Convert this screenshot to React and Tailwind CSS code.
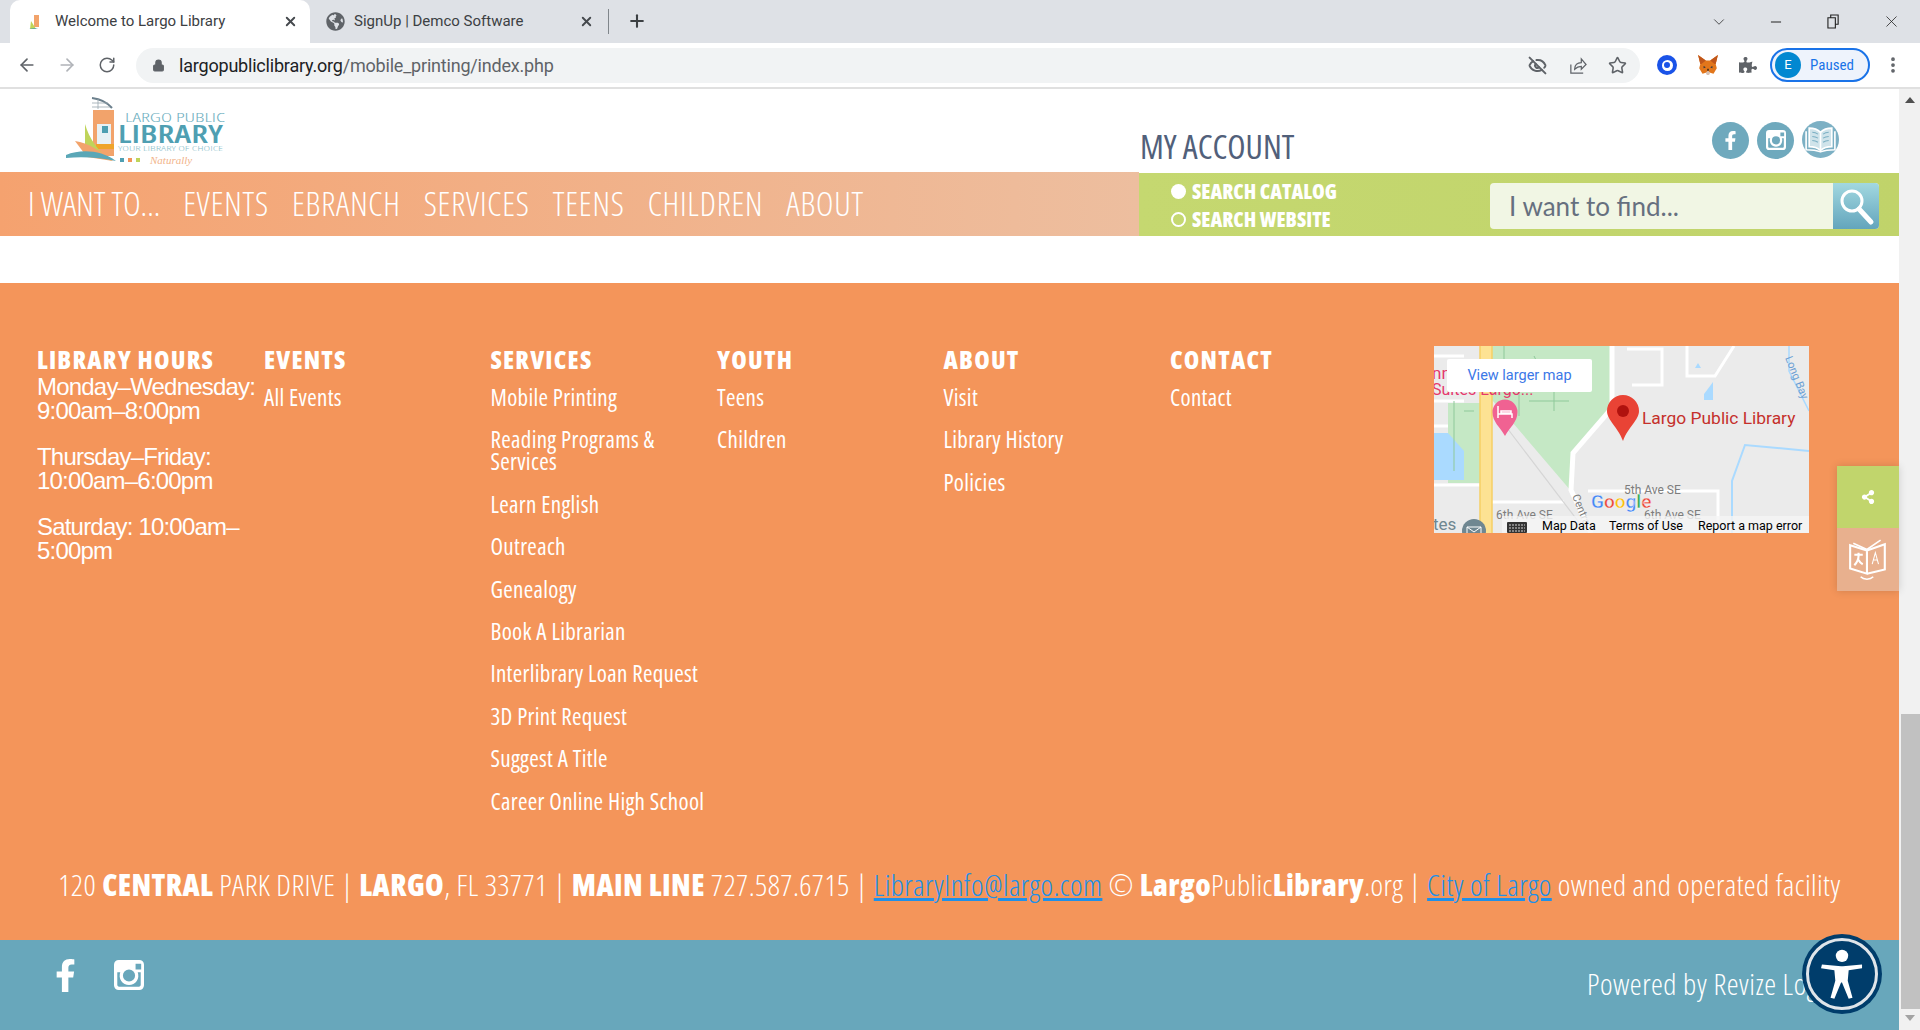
import React from "react";
import { ArrowLeft, ArrowRight, RotateCw, Lock, EyeOff, Star, X, Plus, ChevronDown, Minus, EllipsisVertical } from "lucide-react";
import { FaFacebookF, FaGlobeAmericas, FaPuzzlePiece, FaShareAlt } from "react-icons/fa";

const columns = [
  { title: "EVENTS", links: ["All Events"] },
  {
    title: "SERVICES",
    links: [
      "Mobile Printing",
      "Reading Programs & Services",
      "Learn English",
      "Outreach",
      "Genealogy",
      "Book A Librarian",
      "Interlibrary Loan Request",
      "3D Print Request",
      "Suggest A Title",
      "Career Online High School",
    ],
  },
  { title: "YOUTH", links: ["Teens", "Children"] },
  { title: "ABOUT", links: ["Visit", "Library History", "Policies"] },
  { title: "CONTACT", links: ["Contact"] },
];

const navItems = ["EVENTS", "EBRANCH", "SERVICES", "TEENS", "CHILDREN", "ABOUT"];

function InstaIcon({ className }) {
  return (
    <svg viewBox="0 0 32 32" className={className} fill="currentColor">
      <path
        fillRule="evenodd"
        d="M5 0h22a5 5 0 0 1 5 5v22a5 5 0 0 1-5 5H5a5 5 0 0 1-5-5V5a5 5 0 0 1 5-5zm18 4v6h6V4h-6zM3.500 13v13.500c0 1.200.8 2 2 2h21c1.200 0 2-.8 2-2V13h-3.200a10 10 0 1 1-18.600 0H3.500zM16 10a6.500 6.500 0 1 0 0 13 6.500 6.500 0 0 0 0-13z"
      />
    </svg>
  );
}

function BookIcon() {
  return (
    <svg viewBox="0 0 36 36" className="w-[37px] h-[37px] shrink-0 -mt-[1px]" fill="none" stroke="#fff" strokeWidth="1.600">
      <circle cx="18" cy="18" r="18" fill="#7cb0c4" stroke="none" />
      <path d="M18 11c-3-3-7-4-11-4v18c4 0 8 1 11 3.500C21 26 25 25 29 25V7c-4 0-8 1-11 4z" fill="#cfe3ea" />
      <path d="M18 11v17M4 10v18c5 0 10 .5 14 2 4-1.500 9-2 14-2V10" />
      <path d="M10 11c2 0 4 .6 5.500 1.700M10 15c2 0 4 .6 5.500 1.700M10 19c2 0 4 .6 5.500 1.700M26 11c-2 0-4 .6-5.500 1.700M26 15c-2 0-4 .6-5.500 1.700M26 19c-2 0-4 .6-5.500 1.700" stroke="#7cb0c4" strokeWidth="1" />
    </svg>
  );
}

function Logo() {
  return (
    <svg viewBox="0 0 160 72" className="w-[160px] h-[72px] ml-[65px] shrink-0 font-['Open_Sans',sans-serif] [font-stretch:75%]">
      <path d="M27 3c8 1 15 4 20 10" stroke="#6b7f8c" strokeWidth="2" fill="none" />
      <path d="M27 8h16M33 4v10M27 12h18" stroke="#9aa7ae" strokeWidth="0.800" />
      <rect x="28" y="15" width="21" height="46" fill="#f2a36b" />
      <rect x="32" y="29" width="14" height="20" fill="#e8f1f4" />
      <rect x="37" y="31" width="6" height="7" fill="#4e9fb1" />
      <rect x="31" y="49" width="18" height="5" fill="#efa42a" />
      <path d="M20 29c4 14 13 28 27 37L20 56z" fill="#bfd45a" />
      <path d="M10 46c13 2 26 10 38 20L22 62z" fill="#f2a36b" />
      <path d="M1 60c15-6 35-5 50 6-14-3-32-5-50-3z" fill="#5aa7b7" />
      <text x="60" y="27" fontSize="13" fontWeight="300" textLength="100" lengthAdjust="spacingAndGlyphs" fill="#6fb0bf">LARGO PUBLIC</text>
      <text x="53" y="48" fontWeight="600" fontSize="26" textLength="105" lengthAdjust="spacingAndGlyphs" fill="#4f9fb2">LIBRARY</text>
      <text x="53" y="56" fontSize="8" fontWeight="300" textLength="105" lengthAdjust="spacingAndGlyphs" fill="#8dbfcb">YOUR LIBRARY OF CHOICE</text>
      <rect x="55" y="63" width="4" height="4" fill="#4f9fb2" />
      <rect x="63" y="63" width="4" height="4" fill="#f2935a" />
      <rect x="71" y="63" width="4" height="4" fill="#bfd45a" />
      <text x="85" y="69" fontFamily="Liberation Serif, serif" fontStyle="italic" fontSize="11" fill="#f2b48a">Naturally</text>
    </svg>
  );
}

function MapBox() {
  return (
    <div className="relative w-[375px] h-[187px] shrink-0 overflow-hidden bg-[#ebebeb] font-['Roboto',sans-serif] [font-stretch:100%]">
      <svg viewBox="0 0 375 187" className="block w-[375px] h-[187px]">
        <path d="M58 0H178V62L139 107L137 145L79 77L58 54Z" fill="#c5e8c5" />
        <path d="M14 57h32v80H14z" fill="#c5e8c5" />
        <path d="M0 87h14l16 18v29H0z" fill="#aadaff" />
        <path d="M0 55h30M0 80h14M0 139h46M58 156h72M0 10h30" stroke="#fff" strokeWidth="3" fill="none" />
        <path d="M46 0h12v187H46z" fill="#fde293" />
        <path d="M46 0v187M58 0v187" stroke="#f6cf65" strokeWidth="1.500" />
        <path d="M70 0v25M85 30v40M100 10l10 20 30 10M95 55h40M58 30h50M20 55v70M30 65h10M120 35v30" stroke="#8fc99a" strokeWidth="1" fill="none" />
        <path d="M178 0v62L139 107L137 144l20 43" stroke="#fff" strokeWidth="5" fill="none" />
        <path d="M70 78l80 105" stroke="#d5d5d5" strokeWidth="1.200" />
        <path d="M154 145h130v42M193 3h35v36h-30M253 0v30h28l19-30" stroke="#fff" strokeWidth="3" fill="none" />
        <path d="M261 22l3-5 3 5z M270 48l9-12v18h-9z" fill="#aadaff" />
        <path d="M375 105L311 99L298 135V187" stroke="#aadaff" strokeWidth="2" fill="none" />
        <path d="M355 0v25l20 40" stroke="#aadaff" strokeWidth="1.500" fill="none" />
        <text x="-2" y="33" fontSize="17" fill="#e5386d">nn</text>
        <text x="-2" y="49" fontSize="16" fill="#e5386d">Suites Largo...</text>
        <path d="M71 90c-5-9-12.500-14-12.500-24a12.500 12.500 0 0 1 25 0c0 10-7.500 15-12.500 24z" fill="#f06292" />
        <path d="M64 60v12M64 68h14v4M67 65h10v2h-10z" stroke="#fff" strokeWidth="1.500" fill="none" />
        <path d="M189 95c-5-14-16-21-16-30a16 16 0 0 1 32 0c0 9-11 16-16 30z" fill="#e94335" />
        <circle cx="189" cy="65" r="6" fill="#b0120e" />
        <text x="208" y="78" fontSize="17.400" fill="#c5302b">Largo Public Library</text>
        <text x="190" y="148" fontSize="12" fill="#7d7d7d">5th Ave SE</text>
        <text x="62" y="173" fontSize="12" fill="#7d7d7d">6th Ave SE</text>
        <text x="210" y="173" fontSize="12" fill="#7d7d7d">6th Ave SE</text>
        <text x="138" y="150" fontSize="11" fill="#7d7d7d" transform="rotate(68 138 150)">Centra</text>
        <text x="351" y="12" fontSize="11" fill="#6b9fd4" transform="rotate(68 351 12)">Long Bay</text>
        <rect x="68" y="170" width="307" height="17" fill="#f5f5f5" fillOpacity="0.8" />
        <text x="-1" y="184" fontSize="17" fill="#6f8791">tes</text>
        <circle cx="40" cy="185" r="12" fill="#6f8791" />
        <path d="M33 181h14v9H33zM33 181l7 5 7-5" stroke="#fff" strokeWidth="1" fill="none" />
        <rect x="73" y="176" width="20" height="11" rx="1" fill="#333" />
        <path d="M75 179h16M75 182h16M75 185h16" stroke="#fff" strokeWidth="0.800" strokeDasharray="2 1" />
        <text x="108" y="184" fontSize="12.500" fill="#000">Map Data</text>
        <text x="175" y="184" fontSize="12.500" fill="#000">Terms of Use</text>
        <text x="264" y="184" fontSize="12.500" fill="#000">Report a map error</text>
        <text x="157" y="162" fontSize="19" fontWeight="500" stroke="#fff" strokeWidth="0.300">
          <tspan fill="#4285f4">G</tspan>
          <tspan fill="#ea4335">o</tspan>
          <tspan fill="#fbbc05">o</tspan>
          <tspan fill="#4285f4">g</tspan>
          <tspan fill="#34a853">l</tspan>
          <tspan fill="#ea4335">e</tspan>
        </text>
      </svg>
      <div className="absolute left-[13px] top-[13px] w-[145px] h-[33px] bg-white rounded-[2px] flex items-center justify-center text-[14.500px] text-[#3b78e7]">
        View larger map
      </div>
    </div>
  );
}

function Fox() {
  return (
    <svg viewBox="0 0 20 20" className="w-[22px] h-[22px]">
      <path d="M1 1l7 5h4l7-5-2 8 1 4-3 5-3-1H8l-3 1-3-5 1-4z" fill="#e2761b" />
      <path d="M1 1l7 5-4 3H3zM19 1l-7 5 4 3h1z" fill="#c0561a" />
      <path d="M8 17l2-2 2 2-1 2H9z" fill="#d7c1b3" />
      <path d="M6 11l2 1-2 1zM14 11l-2 1 2 1z" fill="#233447" />
      <path d="M9 15l1-2 1 2z" fill="#161616" />
    </svg>
  );
}

function BrowserChrome() {
  return (
    <>
      <div className="h-[43px] bg-[#dee1e6] flex shrink-0 font-['Roboto',sans-serif] text-[15px] text-[#3c4043]">
        <div className="w-[10px]" />
        <div className="w-[300px] bg-white rounded-t-[10px] flex items-center pl-[18px] pr-[12px]">
          <svg viewBox="0 0 16 16" className="w-[16px] h-[16px] mr-[11px] shrink-0">
            <path d="M6 1h5v12H6z" fill="#f2a36b" />
            <path d="M3 7l5 8H2z" fill="#bfd45a" />
            <path d="M1 15c3-1 7-1 9 0z" fill="#4f9fb2" />
          </svg>
          <span className="flex-1">Welcome to Largo Library</span>
          <X size={15} strokeWidth={3} className="text-[#45494d]" />
        </div>
        <div className="w-[298px] flex items-center pl-[16px] pr-[14px]">
          <FaGlobeAmericas className="w-[19px] h-[19px] text-[#5f6368] mr-[9px] shrink-0" />
          <span className="flex-1">SignUp | Demco Software</span>
          <X size={15} strokeWidth={3} className="text-[#45494d]" />
        </div>
        <div className="w-px h-[25px] mt-[9px] bg-[#80868b]" />
        <Plus size={20} strokeWidth={2.500} className="text-[#3c4043] ml-[18px] mt-[11px]" />
        <div className="flex-1" />
        <div className="flex items-center text-[#222] pr-[19px]">
          <ChevronDown size={18} strokeWidth={1} />
          <Minus size={16} strokeWidth={1.500} className="ml-[40px]" />
          <svg viewBox="0 0 14 16" className="w-[13px] h-[15px] ml-[43px]" fill="none" stroke="#222" strokeWidth="1.200">
            <path d="M1 4h8v11H1zM4 4V1h8v10H9" />
          </svg>
          <X size={19} strokeWidth={1} className="ml-[42px]" />
        </div>
      </div>
      <div className="h-[46px] bg-white border-b-2 border-[#e0e0e0] flex items-center shrink-0 font-['Roboto',sans-serif]">
        <ArrowLeft size={20} className="text-[#5f6368] ml-[17px]" />
        <ArrowRight size={20} className="text-[#b0b3b8] ml-[20px]" />
        <RotateCw size={18} className="text-[#5f6368] ml-[21px]" />
        <div className="ml-[20px] w-[1504px] h-[35px] bg-[#f1f3f4] rounded-full flex items-center pl-[16px] pr-[13px]">
          <Lock size={13} fill="#5f6368" className="text-[#5f6368]" />
          <span className="ml-[14px] text-[18px] tracking-[-0.2px] text-[#202124] flex-1">
            largopubliclibrary.org<span className="text-[#5f6368]">/mobile_printing/index.php</span>
          </span>
          <EyeOff size={19} strokeWidth={2.500} className="text-[#5f6368]" />
          <svg viewBox="0 0 20 20" className="w-[19px] h-[19px] ml-[21px]" fill="none" stroke="#5f6368" strokeWidth="1.300">
            <path d="M3 9v9h13M7 14c0-5 3-7 7-7V3l5 6-5 5v-3c-3 0-5 1-7 3z" />
          </svg>
          <Star size={19} strokeWidth={2} className="text-[#5f6368] ml-[21px]" />
        </div>
        <div className="ml-[17px] w-[20px] h-[20px] rounded-full bg-[#1a53e8] flex items-center justify-center">
          <div className="w-[11px] h-[11px] rounded-full bg-white flex items-center justify-center">
            <div className="w-[6px] h-[6px] rounded-full bg-[#1a53e8]" />
          </div>
        </div>
        <div className="ml-[20px]"><Fox /></div>
        <FaPuzzlePiece className="ml-[20px] w-[18px] h-[18px] text-[#5f6368]" />
        <div className="ml-[13px] w-[100px] h-[34px] rounded-full border-2 border-[#1a73e8] bg-[#eef3fc] flex items-center pl-[3px]">
          <div className="w-[26px] h-[26px] rounded-full bg-[#0288d1] text-white text-[13px] flex items-center justify-center">E</div>
          <span className="ml-[9px] text-[15px] text-[#1a73e8] [font-stretch:75%]">Paused</span>
        </div>
        <EllipsisVertical size={20} strokeWidth={2.500} className="text-[#5f6368] ml-[13px]" />
      </div>
    </>
  );
}

export default function App() {
  return (
    <div className="relative w-[1920px] h-[1030px] overflow-hidden flex flex-col bg-white">
      <BrowserChrome />
      <div className="flex flex-1 min-h-0">
        <div className="w-[1899px] flex flex-col font-['Open_Sans',sans-serif] [font-stretch:75%]">
          {/* site header */}
          <div className="h-[83px] flex items-center shrink-0">
            <Logo />
            <div className="ml-[915px] mt-[32px] text-[33.500px] text-[#51607a] whitespace-nowrap">MY ACCOUNT</div>
            <div className="ml-auto mr-[60px] mt-[19px] flex items-center gap-[8px]">
              <div className="w-[37px] h-[37px] rounded-full bg-[#6fa9bd] flex items-center justify-center text-white">
                <FaFacebookF size={19} />
              </div>
              <div className="w-[37px] h-[37px] rounded-full bg-[#6fa9bd] flex items-center justify-center text-white">
                <InstaIcon className="w-[20px] h-[20px] shrink-0" />
              </div>
              <BookIcon />
            </div>
          </div>

          {/* main nav and search */}
          <div className="h-[64px] flex shrink-0">
            <div className="w-[1139px] bg-gradient-to-r from-[#f5a26f] to-[#edbe9f] flex items-center pl-[28px] gap-[23px] text-[33px] font-light text-white whitespace-nowrap">
              <span>I WANT TO...</span>
              {navItems.map((item) => (
                <span key={item} className="tracking-[0.8px]">{item}</span>
              ))}
            </div>
            <div className="flex-1 mt-[1px] bg-gradient-to-r from-[#c5d870] to-[#c0d36a] flex items-center">
              <div className="ml-[32px] mt-[2px] w-[319px] flex flex-col gap-[7px] text-[20.500px] font-extrabold text-white leading-[21px]">
                <div className="flex items-center gap-[6px]">
                  <span className="w-[15px] h-[15px] rounded-full bg-white" />
                  <span>SEARCH CATALOG</span>
                </div>
                <div className="flex items-center gap-[6px]">
                  <span className="w-[15px] h-[15px] rounded-full border-2 border-white" />
                  <span>SEARCH WEBSITE</span>
                </div>
              </div>
              <div className="w-[389px] h-[46px] mt-[3px] rounded-[4px] bg-[#f1f6e4] flex items-center overflow-hidden">
                <span className="flex-1 pl-[19px] font-['Lato',sans-serif] [font-stretch:100%] text-[26px] text-[#66707f]">I want to find...</span>
                <div className="w-[46px] h-[46px] bg-gradient-to-b from-[#a2d8e0] to-[#63a5bc]">
                  <svg viewBox="0 0 46 46" className="w-[46px] h-[46px]" fill="none" stroke="#fff">
                    <circle cx="19" cy="18" r="10" strokeWidth="3" />
                    <path d="M26 26l12 13" strokeWidth="5" strokeLinecap="round" />
                  </svg>
                </div>
              </div>
            </div>
          </div>

          <div className="h-[47px] shrink-0" />

          {/* footer */}
          <div className="h-[657px] bg-[#f4955a] text-white flex flex-col shrink-0">
            <div className="flex h-[582px] pt-[63px] pl-[37px]">
              <div className="w-[227px] shrink-0">
                <h3 className="text-[25px] leading-[26px] font-black whitespace-nowrap tracking-[1.200px]">LIBRARY HOURS</h3>
                <div className="mt-[3px] font-['Liberation_Sans',sans-serif] text-[24px] leading-[24px] tracking-[-0.8px]">
                  <p>Monday–Wednesday:<br />9:00am–8:00pm</p>
                  <p className="mt-[22px]">Thursday–Friday:<br />10:00am–6:00pm</p>
                  <p className="mt-[22px]">Saturday: 10:00am–<br />5:00pm</p>
                </div>
              </div>
              {columns.map((col) => (
                <div key={col.title} className="w-[226.500px] shrink-0">
                  <h3 className="text-[25px] leading-[26px] font-black tracking-[1.200px]">{col.title}</h3>
                  <ul className="mt-[14px] flex flex-col gap-[20.400px] text-[23px] leading-[22px] font-medium tracking-[0.3px]">
                    {col.links.map((link) => (
                      <li key={link} className="w-[220px]">{link}</li>
                    ))}
                  </ul>
                </div>
              ))}
              <div className="ml-[37.500px]">
                <MapBox />
              </div>
            </div>
            <div className="flex justify-center text-[30px] leading-[40px] font-light whitespace-nowrap tracking-[0.4px]">
              <span className="[&_b]:font-extrabold">
                120 <b>CENTRAL</b> PARK DRIVE | <b>LARGO</b>, FL 33771 | <b>MAIN LINE</b> 727.587.6715 |{" "}
                <span className="text-[#2090e8] underline">LibraryInfo@largo.com</span> © <b>Largo</b>Public<b>Library</b>.org |{" "}
                <span className="text-[#2090e8] underline">City of Largo</span> owned and operated facility
              </span>
            </div>
          </div>

          <div className="h-[90px] bg-[#68a7bb] text-white flex items-center shrink-0">
            <FaFacebookF className="ml-[55px] mb-[20px] w-[21px] h-[33px] shrink-0" />
            <InstaIcon className="ml-[38px] mb-[20px] w-[30px] h-[30px] shrink-0" />
            <span className="ml-[1443px] -mt-[4px] text-[30px] font-light whitespace-nowrap tracking-[0.5px]">Powered by Revize Login</span>
          </div>
        </div>

        {/* page scrollbar */}
        <div className="w-[21px] bg-[#f1f1f1] flex flex-col items-center relative">
          <div className="mt-[8px] w-0 h-0 border-l-[5px] border-r-[5px] border-b-[6px] border-l-transparent border-r-transparent border-b-[#505050]" />
          <div className="mt-[611px] w-[19px] ml-[2px] h-[295px] bg-[#c1c1c1]" />
          <div className="mt-[6px] w-0 h-0 border-l-[5px] border-r-[5px] border-t-[6px] border-l-transparent border-r-transparent border-t-[#a3a3a3]" />
        </div>
      </div>

      {/* floating side buttons */}
      <div className="absolute left-[1837px] top-[466px] w-[62px] flex flex-col shadow-[0_0_8px_rgba(0,0,0,0.15)]">
        <div className="h-[62px] bg-[#c1d56c] flex items-center justify-center">
          <FaShareAlt className="text-white w-[14px] h-[14px]" />
        </div>
        <div className="h-[63px] bg-[#e8b08e] flex items-center justify-center">
          <svg viewBox="0 0 36 40" className="w-[38px] h-[42px]" fill="none" stroke="#fff" strokeWidth="2">
            <path d="M1 6l16 5v22L1 28zM17 11l17-6v24l-17 4" />
            <path d="M4 4l13 6 13-9" strokeWidth="1.500" />
            <path d="M11 36c3 3 9 3 12 0" strokeWidth="1.500" />
            <path d="M5 15h8M9 13v3c0 4-2 7-4 9M9 20c1 2 2 3 4 4" strokeWidth="2" />
            <path d="M22 24l3-11 3 11M23 20h4" strokeWidth="1" />
          </svg>
        </div>
      </div>

      {/* accessibility button */}
      <div className="absolute left-[1802px] top-[934px] w-[80px] h-[80px] rounded-full bg-[#003d6b] flex items-center justify-center">
        <div className="w-[72px] h-[72px] rounded-full border-[3px] border-[#dfe5ea] flex items-center justify-center">
          <svg viewBox="0 0 44 56" className="w-[42px] h-[54px]" fill="#fff">
            <circle cx="22" cy="9" r="6.500" />
            <path d="M1 18l20 2h2l20-2v4l-14 2-1 11 5 18-4 1-7-17-1 0-7 17-4-1 5-18-1-11-14-2z" />
          </svg>
        </div>
      </div>
    </div>
  );
}
